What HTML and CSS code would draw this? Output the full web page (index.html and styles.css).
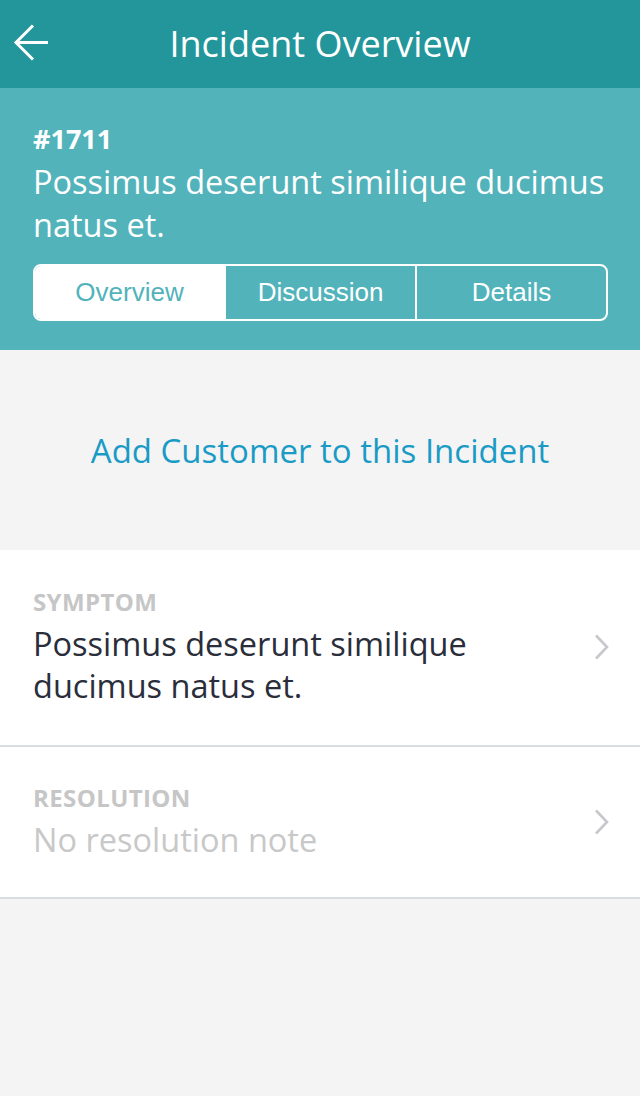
FILE: index.html
```html
<!DOCTYPE html>
<html lang="en">
<head>
    <meta charset="UTF-8">
    <meta name="viewport" content="width=device-width, initial-scale=1.0">
    <title>Incident Overview</title>
    <link rel="stylesheet" href="styles.css">
</head>
<body>
    <div class="top-bar">
        <svg class="back-icon" width="40" height="40" viewBox="0 0 40 40">
            <path d="M20 2.5 L3 19.5 L20 36.5 M3 19.5 L35 19.5" fill="none" stroke="#fff" stroke-width="3"/>
        </svg>
        <h1 class="top-title">Incident Overview</h1>
    </div>

    <div class="incident-head">
        <div class="incident-no">#1711</div>
        <div class="incident-name">Possimus deserunt similique ducimus natus et.</div>
        <div class="tabs">
            <div class="tab active">Overview</div>
            <div class="tab">Discussion</div>
            <div class="tab">Details</div>
        </div>
    </div>

    <div class="add-customer">Add Customer to this Incident</div>

    <div class="list">
        <div class="row symptom">
            <div class="row-text">
                <div class="row-label">SYMPTOM</div>
                <div class="row-value">Possimus deserunt similique ducimus natus et.</div>
            </div>
            <svg class="chevron" width="16" height="26" viewBox="0 0 16 26">
                <path d="M2 1.5 L13 13 L2 24.5" fill="none" stroke="#c7c7cc" stroke-width="2.6"/>
            </svg>
        </div>
        <div class="row resolution">
            <div class="row-text">
                <div class="row-label">RESOLUTION</div>
                <div class="row-value empty">No resolution note</div>
            </div>
            <svg class="chevron" width="16" height="26" viewBox="0 0 16 26">
                <path d="M2 1.5 L13 13 L2 24.5" fill="none" stroke="#c7c7cc" stroke-width="2.6"/>
            </svg>
        </div>
    </div>
</body>
</html>
```

FILE: styles.css
```css
body{
    margin: 0;
    background: #f4f4f4;
    font-family: "Open Sans", "Noto Sans", sans-serif;
}

.top-bar{
    background: #23969c;
    height: 88px;
    display: flex;
    align-items: center;
    justify-content: center;
    position: relative;
}

/* back arrow sits over the bar, title stays centered */
.back-icon{
    position: absolute;
    left: 13px;
    top: 23px;
}

.top-title{
    margin: 0 0 2px 0;
    color: #fff;
    font-weight: normal;
    font-size: 36px;
}

.incident-head{
    background: #52b3bb;
    color: #fff;
    padding: 30px 32px 29px 33px;
}

.incident-no{
    font-size: 27px;
    font-weight: bold;
    line-height: 42px;
}

.incident-name{
    font-size: 32.5px;
    line-height: 43px;
    margin-bottom: 18px;
}

.tabs{
    display: flex;
    border: 2px solid #fff;
    border-radius: 8px;
    overflow: hidden;
    height: 53px;
}

.tab{
    flex: 1;
    display: flex;
    align-items: center;
    justify-content: center;
    font-family: "Liberation Sans", sans-serif;
    font-size: 26px;
    color: #fff;
}

.tab + .tab{
    border-left: 2px solid #fff;
}

.tab.active{
    background: #fff;
    color: #52b3bb;
}

.add-customer{
    height: 200px;
    display: flex;
    align-items: center;
    justify-content: center;
    color: #1a9bc6;
    font-size: 33px;
}

.list{
    background: #fff;
}

.row{
    display: flex;
    align-items: center;
    padding: 36px 30px 36px 33px;
    border-bottom: 2px solid #d8dde2;
}

.row.symptom{
    padding-top: 37px;
    padding-bottom: 38px;
}

.row-text{
    flex: 1;
    padding-right: 80px;
}

.row-label{
    color: #c6c6c6;
    font-weight: bold;
    font-size: 24px;
    letter-spacing: 0.4px;
    line-height: 30px;
    margin-bottom: 6px;
}

.row-value{
    color: #2a2d3a;
    font-size: 32.5px;
    line-height: 42px;
}

.row-value.empty{
    color: #c8c8c8;
}
```
